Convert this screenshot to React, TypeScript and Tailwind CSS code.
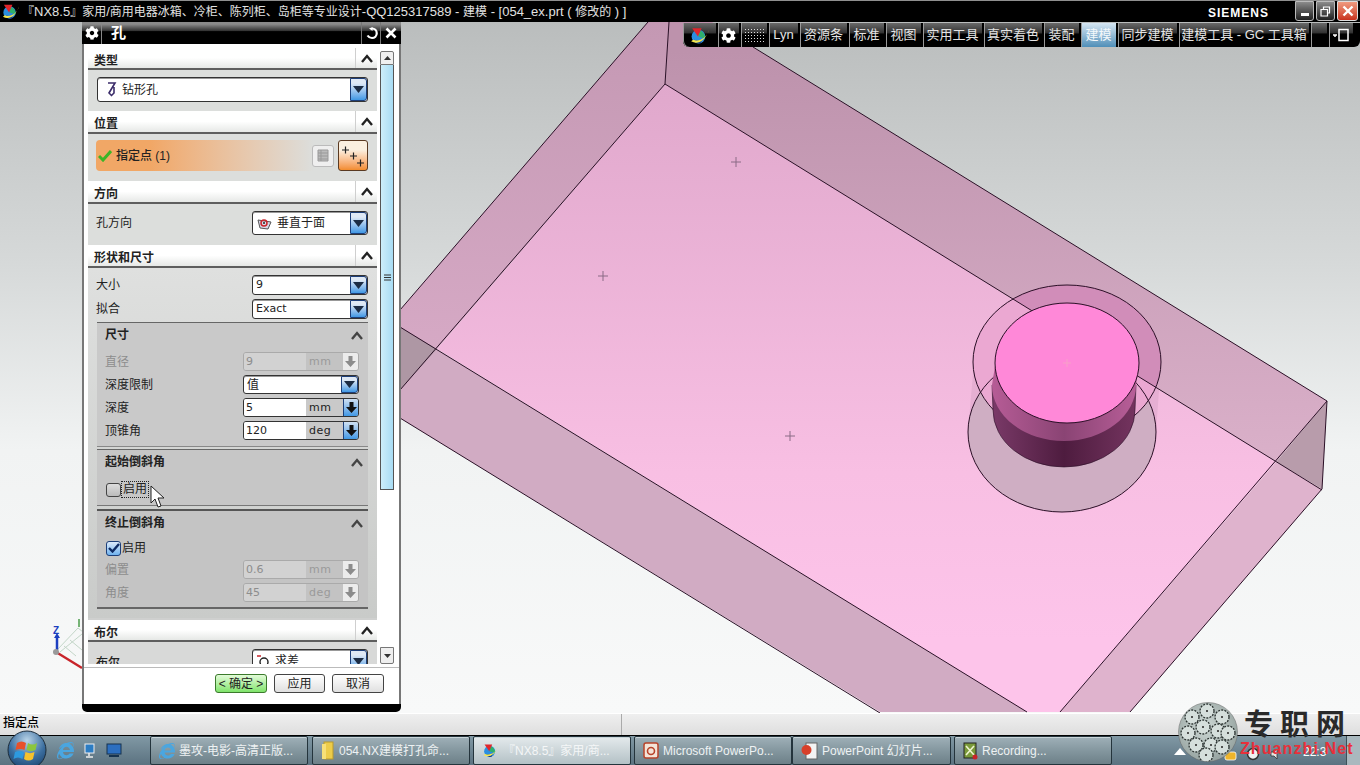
import React from "react";
import { FaCog, FaInternetExplorer } from "react-icons/fa";

const font = "[font-family:'Liberation_Sans','Noto_Sans_CJK_SC',sans-serif]";

function NxLogo({ size = 18 }: { size?: number }) {
  return (
    <svg width={size} height={size} viewBox="0 0 20 20">
      <circle cx="9" cy="11" r="6.5" fill="#2b8fe0" />
      <path d="M9 5a6.500 6.500 0 0 1 6 8L9 11z" fill="#2fb06c" />
      <path d="M3 3h9L8.500 11z" fill="#e0262c" />
      <path d="M5 14c3 1.500 6 .5 8-1l-2 4.500c-2 .5-5-.5-6-3.500z" fill="#15408f" />
      <path d="M2 15.500c6 3.500 13 .5 17-11-2 8-10 12-15 9.500z" fill="#f6e64e" />
    </svg>
  );
}

function Chevron({ cls = "text-[#222]" }: { cls?: string }) {
  return (
    <svg width="12" height="9" viewBox="0 0 12 9" className={cls}>
      <path d="M1 8 6 2l5 6" fill="none" stroke="currentColor" strokeWidth="2.4" />
    </svg>
  );
}

function Head({ title, h = "h-[23px]" }: { title: string; h?: string }) {
  return (
    <div className={`flex ${h} items-stretch border-b-2 border-[#5e5e5e] bg-gradient-to-b from-white from-50% to-[#e6e8e6]`}>
      <div className="flex-1 pl-[6px] pt-[5px] text-[12px] font-bold leading-[17px] text-[#222]">{title}</div>
      <div className="flex w-[22px] items-center justify-center border-l border-[#cfcfcf]">
        <Chevron />
      </div>
    </div>
  );
}

function DropBtn() {
  return (
    <div className="flex w-[17px] shrink-0 items-center justify-center rounded-r-[3px] border border-[#1d3f7a] bg-gradient-to-b from-[#dfe9f5] from-20% to-[#3f98e4]">
      <svg width="11" height="7" viewBox="0 0 11 7">
        <path d="M0 0h11L5.5 7z" fill="#1c2c44" />
      </svg>
    </div>
  );
}

function Select({ children, w, h = "h-[20px]" }: { children: React.ReactNode; w: string; h?: string }) {
  return (
    <div className={`flex ${w} ${h} shrink-0 rounded-[3px] border border-[#333] bg-white shadow-[inset_0_1px_0_#999]`}>
      <div className="flex min-w-0 flex-1 items-center gap-[5px] pl-[3px] text-[12px] text-[#222]">{children}</div>
      <DropBtn />
    </div>
  );
}

function Field({ value, unit, disabled }: { value: string; unit: string; disabled?: boolean }) {
  return (
    <div
      className={`flex h-[19px] w-[116px] overflow-hidden rounded-[3px] border font-['DejaVu_Sans',sans-serif] text-[11px] ${
        disabled ? "border-[#aaa] text-[#8d8d8d]" : "border-[#333] text-[#222]"
      }`}
    >
      <div className={`w-[62px] pl-[2px] leading-[17px] ${disabled ? "bg-[#d2d2d2]" : "bg-white"}`}>{value}</div>
      <div className={`w-[37px] pl-[3px] leading-[17px] tracking-[0.5px] ${disabled ? "bg-[#c3c3c3] text-[#9a9a9a]" : "bg-[#c9c9c9] font-medium"}`}>{unit}</div>
      <div
        className={`flex flex-1 items-center justify-center ${
          disabled ? "bg-[#ececec]" : "border-l border-[#1d3f7a] bg-gradient-to-b from-[#cfe0f2] to-[#3f98e4]"
        }`}
      >
        <svg width="11" height="11" viewBox="0 0 11 11">
          <path d="M3.5 0h4v5H11L5.5 11 0 5h3.5z" fill={disabled ? "#8c8c8c" : "#111"} />
        </svg>
      </div>
    </div>
  );
}

function LabelRow({ label, dim, children }: { label: string; dim?: boolean; children: React.ReactNode }) {
  return (
    <div className="flex h-[19px] items-center justify-between pl-[8px] pr-[9px]">
      <span className={`text-[12px] ${dim ? "text-[#8d8d8d]" : "text-[#222]"}`}>{label}</span>
      {children}
    </div>
  );
}

function SubHead({ title }: { title: string }) {
  return (
    <div className="flex h-[24px] items-center justify-between pl-[8px] pr-[5px]">
      <span className="text-[12px] font-bold text-[#222]">{title}</span>
      <Chevron cls="text-[#444]" />
    </div>
  );
}

function Cursor() {
  return (
    <svg width="16" height="24" viewBox="0 0 16 24" className="absolute left-[66px] top-[441px]">
      <path d="M1 1v17l4-4 3 8 3-1-3-8h6z" fill="#fff" stroke="#222" strokeWidth="1" />
    </svg>
  );
}

function Dialog() {
  return (
    <div className={`absolute left-[82px] top-0 flex h-[690px] w-[319px] flex-col overflow-hidden rounded-b-[5px] bg-black ${font}`}>
      {/* title */}
      <div className="flex h-[22px] shrink-0 items-stretch bg-gradient-to-b from-[#8a8a8a] from-10% via-[#333] via-40% to-black to-45%">
        <div className="flex w-[20px] items-center justify-center border-r border-[#888] text-white">
          <FaCog size={14} />
        </div>
        <div className="flex-1 pl-[9px] text-[15px] font-bold leading-[22px] text-white">孔</div>
        <div className="flex w-[20px] items-center justify-center border-x border-[#777] text-white">
          <svg width="13" height="13" viewBox="0 0 13 13">
            <path d="M7 1.5a4.5 4.5 0 0 1 0 9.5c-2 0-3.500-1-4.500-2.500" fill="none" stroke="#fff" strokeWidth="2.200" />
            <path d="M4 1.500 7.500 0v4z" fill="#fff" />
          </svg>
        </div>
        <div className="flex w-[20px] items-center justify-center text-white">
          <svg width="12" height="12" viewBox="0 0 12 12">
            <path d="M1.500 1.500l9 9M10.500 1.500l-9 9" stroke="#fff" strokeWidth="2.600" />
          </svg>
        </div>
      </div>

      {/* body */}
      <div className="relative flex h-[660px] shrink-0 flex-col border-x-2 border-[#777] bg-white">
        <div className="flex h-[623px] flex-1">
          <div className="ml-[4px] h-[620px] w-[289px] shrink-0 overflow-hidden pt-[4px]">
            <Head title="类型" h="h-[22px]" />
            <div className="h-[41px] bg-[#dcdedc] px-[9px] pt-[7px]">
              <Select w="w-[271px]" h="h-[25px]">
                <svg width="11" height="15" viewBox="0 0 11 15" className="ml-[5px]">
                  <path d="M2 1h7L3 11l3 3M8 5v6l-3 3" fill="none" stroke="#3b2c6a" strokeWidth="1.600" />
                </svg>
                <span className="text-[12px]">钻形孔</span>
              </Select>
            </div>

            <Head title="位置" />
            <div className="flex h-[47px] items-start bg-[#dcdedc] pl-[8px] pt-[6px]">
              <div className="flex h-[31px] w-[272px] items-center rounded-[4px] bg-gradient-to-r from-[#f1a766] from-20% to-[#dcdedc] to-80%">
                <svg width="14" height="12" viewBox="0 0 14 12" className="ml-[2px]">
                  <path d="M1 6l4 4 8-9" fill="none" stroke="#3cb526" strokeWidth="3" />
                </svg>
                <span className="ml-[4px] text-[12px] font-medium text-[#222]">指定点 (1)</span>
                <div className="ml-auto mr-[4px] flex h-[22px] w-[22px] items-center justify-center rounded-[3px] border border-[#bbb] bg-[#efefef]">
                  <svg width="12" height="13" viewBox="0 0 12 13">
                    <path d="M1 1h10v11H1zM1 4h10M1 7h10M1 10h10M4 1v11" fill="#bbb" stroke="#999" strokeWidth="1" />
                  </svg>
                </div>
                <div className="flex h-[31px] w-[30px] items-center justify-center rounded-[3px] border border-[#5a3a22] bg-gradient-to-b from-[#fbf0e0] from-30% to-[#f28c2c]">
                  <svg width="26" height="24" viewBox="0 0 26 24">
                    <path d="M2 6h7M5.500 2.500v7M10 12h7M13.500 8.500v7M17 19h7M20.500 15.500v7" stroke="#222" strokeWidth="1.200" />
                  </svg>
                </div>
              </div>
            </div>

            <Head title="方向" />
            <div className="flex h-[41px] items-start justify-between bg-[#dcdedc] pl-[8px] pr-[9px] pt-[7px]">
              <span className="pt-[3px] text-[12px] text-[#222]">孔方向</span>
              <Select w="w-[116px]" h="h-[24px]">
                <svg width="15" height="13" viewBox="0 0 15 13" className="ml-[1px]">
                  <path d="M1 3l13 2-3 7-8-1z" fill="#d9d9e8" stroke="#555" />
                  <circle cx="7" cy="6" r="3" fill="none" stroke="#c8242a" strokeWidth="1.500" />
                  <circle cx="7" cy="6" r="1" fill="#222" />
                </svg>
                <span className="text-[12px]">垂直于面</span>
              </Select>
            </div>

            <Head title="形状和尺寸" />
            <div className="h-[350px] bg-gradient-to-b from-[#dfe0df] to-[#c9cbc9] pt-[7px]">
              <div className="flex h-[20px] items-center justify-between pl-[8px] pr-[9px]">
                <span className="text-[12px] text-[#222]">大小</span>
                <Select w="w-[116px]">
                  <span className="font-['DejaVu_Sans',sans-serif] text-[11px]">9</span>
                </Select>
              </div>
              <div className="mt-[4px] flex h-[20px] items-center justify-between pl-[8px] pr-[9px]">
                <span className="text-[12px] text-[#222]">拟合</span>
                <Select w="w-[116px]">
                  <span className="font-['DejaVu_Sans',sans-serif] text-[11px]">Exact</span>
                </Select>
              </div>

              <div className="ml-[9px] mt-[3px] h-[125px] w-[271px] border-y border-t-[#666] border-b-[#888] bg-[#c9c9c9]">
                <SubHead title="尺寸" />
                <div className="mt-[5px] flex flex-col gap-[4px]">
                  <LabelRow label="直径" dim>
                    <Field value="9" unit="mm" disabled />
                  </LabelRow>
                  <LabelRow label="深度限制">
                    <Select w="w-[116px]" h="h-[19px]">
                      <span className="text-[12px]">值</span>
                    </Select>
                  </LabelRow>
                  <LabelRow label="深度">
                    <Field value="5" unit="mm" />
                  </LabelRow>
                  <LabelRow label="顶锥角">
                    <Field value="120" unit="deg" />
                  </LabelRow>
                </div>
              </div>

              <div className="ml-[9px] mt-[2px] h-[57px] w-[271px] border-y border-t-[#666] border-b-[#777] bg-[#c6c6c6]">
                <SubHead title="起始倒斜角" />
                <div className="mt-[7px] flex items-center pl-[9px]">
                  <div className="h-[14px] w-[15px] rounded-[3px] border border-[#444] bg-gradient-to-b from-[#ddd] to-[#bbb]" />
                  <span className="border border-dotted border-[#222] px-[1px] text-[12px] leading-[15px] text-[#222]">启用</span>
                </div>
              </div>

              <div className="ml-[9px] mt-[3px] h-[100px] w-[271px] border-y-2 border-t-[#555] border-b-[#666] bg-[#c4c4c4]">
                <SubHead title="终止倒斜角" />
                <div className="mt-[6px] flex h-[14px] items-center pl-[9px]">
                  <div className="flex h-[15px] w-[15px] items-center justify-center rounded-[3px] border border-[#1d3f7a] bg-gradient-to-b from-[#dceafa] to-[#6fb2ee]">
                    <svg width="12" height="10" viewBox="0 0 12 10">
                      <path d="M1 5l3.500 3.500L11 1" fill="none" stroke="#0e2a63" strokeWidth="2.400" />
                    </svg>
                  </div>
                  <span className="pl-[1px] text-[12px] text-[#222]">启用</span>
                </div>
                <div className="mt-[5px] flex flex-col gap-[4px]">
                  <LabelRow label="偏置" dim>
                    <Field value="0.6" unit="mm" disabled />
                  </LabelRow>
                  <LabelRow label="角度" dim>
                    <Field value="45" unit="deg" disabled />
                  </LabelRow>
                </div>
              </div>
            </div>

            <div className="h-[2px] bg-[#cfd0cf]" />
            <Head title="布尔" h="h-[22px]" />
            <div className="flex h-[40px] items-start justify-between bg-[#d8d9d8] pl-[8px] pr-[9px] pt-[7px]">
              <span className="pt-[5px] text-[12px] font-medium text-[#222]">布尔</span>
              <Select w="w-[116px]" h="h-[24px]">
                <svg width="14" height="12" viewBox="0 0 14 12">
                  <path d="M1 1h4" stroke="#c8242a" strokeWidth="1.500" />
                  <circle cx="8" cy="7" r="4" fill="none" stroke="#222" strokeWidth="1.400" />
                </svg>
                <span className="text-[12px]">求差</span>
              </Select>
            </div>
          </div>

          {/* scrollbar */}
          <div className="ml-[3px] flex h-[620px] w-[14px] flex-col pt-[7px]">
            <div className="flex h-[14px] shrink-0 items-center justify-center rounded-t-[2px] border border-[#777] bg-[#f0f0f0]">
              <svg width="7" height="4" viewBox="0 0 7 4">
                <path d="M0 4l3.500-4L7 4z" fill="#333" />
              </svg>
            </div>
            <div className="flex h-[425px] shrink-0 items-center justify-center border-x border-b border-[#555] bg-gradient-to-r from-[#cdeefa] to-[#a8dcf4]">
              <svg width="7" height="7" viewBox="0 0 7 7">
                <path d="M0 1h7M0 3.500h7M0 6h7" stroke="#333" strokeWidth="1" />
              </svg>
            </div>
            <div className="flex-1" />
            <div className="flex h-[17px] shrink-0 items-center justify-center rounded-b-[2px] border border-[#777] bg-[#efefef]">
              <svg width="7" height="4" viewBox="0 0 7 4">
                <path d="M0 0l3.500 4L7 0z" fill="#333" />
              </svg>
            </div>
          </div>
        </div>

        {/* footer */}
        <div className="flex h-[37px] shrink-0 items-start gap-[7px] border-t border-[#bbb] pl-[131px] pt-[6px] text-[12px]">
          <div className="flex h-[19px] w-[52px] items-center justify-center rounded-[3px] border border-[#3b7a2c] bg-gradient-to-b from-[#e2fbd8] to-[#7fe36a] text-[#222]">&lt; 确定 &gt;</div>
          <div className="flex h-[19px] w-[51px] items-center justify-center rounded-[3px] border border-[#444] bg-gradient-to-b from-white to-[#e0e0e0] text-[#222]">应用</div>
          <div className="flex h-[19px] w-[52px] items-center justify-center rounded-[3px] border border-[#444] bg-gradient-to-b from-white to-[#e0e0e0] text-[#222]">取消</div>
        </div>
        <Cursor />
      </div>
    </div>
  );
}

const tabs: [string, string, boolean?][] = [
  ["Lyn", "w-[29px]"],
  ["资源条", "w-[47px]"],
  ["标准", "w-[35px]"],
  ["视图", "w-[35px]"],
  ["实用工具", "w-[59px]"],
  ["真实着色", "w-[58px]"],
  ["装配", "w-[35px]"],
  ["建模", "w-[35px]", true],
  ["同步建模", "w-[59px]"],
  ["建模工具 - GC 工具箱", "w-[130px]"],
  ["", "w-[16px]"],
];

const tabBase = "flex h-full items-center justify-center whitespace-nowrap shadow-[inset_1px_0_0_#999]";
const tabDark = "bg-gradient-to-b from-[#6a6a6a] via-[#333] via-40% to-black to-50% text-[#e4e4e4]";

function Toolbar() {
  return (
    <div className={`absolute right-0 top-[1px] flex h-[24px] w-[677px] items-stretch gap-[2px] rounded-b-[6px] bg-black text-[13px] ${font}`}>
      <div className={`${tabBase} ${tabDark} w-[33px] rounded-bl-[6px]`}>
        <NxLogo size={21} />
      </div>
      <div className={`${tabBase} ${tabDark} w-[21px]`}>
        <FaCog size={15} color="#fff" />
      </div>
      <div className={`${tabBase} ${tabDark} w-[26px]`}>
        <svg width="20" height="14" viewBox="0 0 20 14">
          {[1, 4, 7, 10, 13].map((y) =>
            [1, 4, 7, 10, 13, 16, 19].map((x) => <rect key={`${x}-${y}`} x={x} y={y} width="1" height="1" fill="#ddd" />)
          )}
        </svg>
      </div>
      {tabs.map(([label, w, active], i) => (
        <div
          key={i}
          className={`${tabBase} ${w} ${active ? "bg-gradient-to-b from-[#d6e6f2] to-[#4f8fb8] text-[#f4f8fb]" : tabDark}`}
        >
          {label}
        </div>
      ))}
      <div className={`${tabBase} ${tabDark} w-[24px]`}>
        <svg width="18" height="14" viewBox="0 0 18 14">
          <path d="M1 7h4M3 9V7" stroke="#fff" strokeWidth="1.500" />
          <rect x="7" y="1.500" width="9" height="11" fill="none" stroke="#fff" strokeWidth="1.500" />
        </svg>
      </div>
    </div>
  );
}

function Scene() {
  const L = "#2a0f26";
  return (
    <svg width="1360" height="691" viewBox="0 22 1360 691" className="block">
      <defs>
        <linearGradient id="bg" gradientUnits="userSpaceOnUse" x1="0" y1="22" x2="0" y2="712">
          <stop offset="0" stopColor="#babdbd" />
          <stop offset="0.35" stopColor="#d6d9d9" />
          <stop offset="0.62" stopColor="#f1f3f3" />
          <stop offset="1" stopColor="#f8f9f9" />
        </linearGradient>
        <linearGradient id="floor" gradientUnits="userSpaceOnUse" x1="0" y1="84" x2="0" y2="640">
          <stop offset="0" stopColor="#e0a8cc" />
          <stop offset="0.7" stopColor="#f8bfe3" />
          <stop offset="1" stopColor="#fdc4ea" />
        </linearGradient>
        <linearGradient id="leftw" gradientUnits="userSpaceOnUse" x1="0" y1="22" x2="0" y2="390">
          <stop offset="0" stopColor="#c498b3" />
          <stop offset="1" stopColor="#d8abc7" />
        </linearGradient>
        <linearGradient id="topw" gradientUnits="userSpaceOnUse" x1="0" y1="50" x2="0" y2="460">
          <stop offset="0" stopColor="#bd92ac" />
          <stop offset="1" stopColor="#dab0c9" />
        </linearGradient>
        <linearGradient id="side" gradientUnits="userSpaceOnUse" x1="992" y1="0" x2="1136" y2="0">
          <stop offset="0" stopColor="#7a3a68" />
          <stop offset="0.5" stopColor="#4e1c3f" />
          <stop offset="1" stopColor="#74345f" />
        </linearGradient>
        <linearGradient id="side2" gradientUnits="userSpaceOnUse" x1="992" y1="0" x2="1136" y2="0">
          <stop offset="0" stopColor="#b65c96" />
          <stop offset="0.5" stopColor="#8a4474" />
          <stop offset="1" stopColor="#b85e98" />
        </linearGradient>
        <clipPath id="topclip">
          <polygon points="669,22 712,22 1327,401 1277,462 665,84" />
        </clipPath>
      </defs>
      <rect x="0" y="22" width="1360" height="691" fill="url(#bg)" />

      <polygon points="400,310 648,22 669,22 665,84 437,349 400,390" fill="url(#leftw)" />
      <polygon points="669,22 712,22 1327,401 1276,462 665,84" fill="url(#topw)" />
      <polygon points="665,84 1276,462 1060,712 1027,712 437,349" fill="url(#floor)" />
      <polygon points="400,327 1027,712 880,712 400,418" fill="#d1abc3" />
      <polygon points="400,327 437,349 400,390" fill="#ae97a4" />
      <polygon points="1276,462 1322,489 1130,712 1060,712" fill="#dfb3cd" />
      <polygon points="1276,462 1327,401 1322,489" fill="#b89cab" />

      {/* hole walls */}
      <polygon points="974,362 968,432 1156,432 1161,362" fill="#dba6c8" opacity="0.55" />
      <ellipse cx="1062" cy="432" rx="94" ry="80" fill="#cfaec3" />
      <ellipse cx="1067" cy="362" rx="94" ry="77" fill="#eba8d2" />
      <ellipse cx="1067" cy="362" rx="94" ry="77" fill="#d18db9" clipPath="url(#topclip)" />
      <ellipse cx="1062" cy="432" rx="94" ry="80" fill="none" stroke={L} strokeWidth="1" />
      <ellipse cx="1067" cy="362" rx="94" ry="77" fill="none" stroke={L} strokeWidth="1" />

      <g fill="none" stroke={L} strokeWidth="1">
        <path d="M400 310 648 22" />
        <path d="M669 22 665 84" />
        <path d="M665 84 400 390" />
        <path d="M665 84 1322 490" />
        <path d="M753 47 1327 401 1322 489 1130 712" />
        <path d="M1327 401 1060 712" />
        <path d="M400 327 1027 712" />
        <path d="M400 418 880 713" />
      </g>

      {/* pin */}
      <path d="M992 385 993 410A71 57 0 0 0 1135 410L1136 385z" fill="url(#side)" stroke={L} strokeWidth="0.600" />
      <path d="M995 366 992 385A72 56 0 0 0 1136 385L1139 366z" fill="url(#side2)" />
      <ellipse cx="1067" cy="363" rx="72" ry="60" fill="#ff88d8" stroke={L} strokeWidth="1" />

      <g stroke="#8a6a85" strokeWidth="1">
        <path d="M731 162h10M736 157v10" />
        <path d="M598 276h10M603 271v10" />
        <path d="M785 436h10M790 431v10" />
      </g>
      <path d="M1063 363h8M1067 359v8" stroke="#f7a0c8" strokeWidth="1" />

      {/* triad */}
      <g fill="none" strokeWidth="1">
        <path d="M57 650 78 628l5 4M60 652 82 634M70 640l12 10M64 646l12 10" stroke="#c3d6c8" />
        <path d="M79 627v-8" stroke="#4a9c4a" strokeWidth="1.500" />
      </g>
      <path d="M56 652 82 668" stroke="#c8242a" strokeWidth="2.500" />
      <path d="M57 650V636" stroke="#1d3fc0" strokeWidth="2.500" />
      <path d="M54 638l3-5 3 5z" fill="#1d3fc0" />
      <circle cx="56" cy="652" r="3" fill="#9a9a9a" />
      <text x="53" y="634" fontSize="10" fontFamily="Liberation Sans" fontWeight="700" fill="#1d3fc0">Z</text>
    </svg>
  );
}

function StartOrb() {
  return (
    <svg width="40" height="40" viewBox="0 0 40 40" className="absolute left-[7px] top-[-6px]">
      <defs>
        <radialGradient id="orb" cx="0.5" cy="0.25" r="0.85">
          <stop offset="0" stopColor="#b9d4e8" />
          <stop offset="0.55" stopColor="#3c6fa0" />
          <stop offset="1" stopColor="#143a63" />
        </radialGradient>
      </defs>
      <circle cx="20" cy="20" r="19" fill="url(#orb)" stroke="#1c2c3a" />
      <path d="M10 13c3-2 6-2 9 0l-1.500 7c-3-1.500-6-1.500-9 0z" fill="#e8512a" />
      <path d="M21 13c3 2 6 2 9 0l-1.500 7c-3 1.500-6 1.500-9 0z" fill="#8cc63e" />
      <path d="M8 22c3-1.500 6-1.500 9 0l-1.500 7c-3-2-6-2-9 0z" fill="#2d9ae0" />
      <path d="M18.500 22c3 1.500 6 1.500 9 0l-1.500 7c-3 2-6 2-9 0z" fill="#f6c22c" />
    </svg>
  );
}

const btnDark = "bg-gradient-to-b from-[#9fb0b8] via-[#84979f] via-50% to-[#6d8088]";

function TaskBtn({ icon, label, w, light, ml }: { icon: React.ReactNode; label: string; w: string; light?: boolean; ml?: string }) {
  return (
    <div
      className={`flex h-full ${w} ${ml ?? ""} items-center gap-[4px] overflow-hidden whitespace-nowrap rounded-[2px] border border-[#24343c] pl-[8px] text-[12px] shadow-[inset_0_1px_0_#c8d4d8] ${
        light ? "bg-gradient-to-b from-[#e4eaec] to-[#b4c1c6] text-[#f4f6f7]" : `${btnDark} text-[#eef2f3]`
      }`}
    >
      {icon}
      <span>{label}</span>
    </div>
  );
}

function Ball() {
  const pts = [
    [14, 16], [29, 10], [44, 16], [10, 32], [25, 26], [40, 30], [50, 32], [18, 44], [33, 44], [44, 46], [28, 54],
  ];
  return (
    <svg width="60" height="62" viewBox="0 0 60 62">
      <defs>
        <radialGradient id="ball2" cx="0.45" cy="0.4" r="0.7">
          <stop offset="0" stopColor="#cdd8d5" />
          <stop offset="1" stopColor="#8f9c99" />
        </radialGradient>
        <clipPath id="ballclip">
          <circle cx="30" cy="31" r="29.500" />
        </clipPath>
      </defs>
      <circle cx="30" cy="31" r="29.500" fill="url(#ball2)" stroke="#666" strokeWidth="0.500" />
      <g clipPath="url(#ballclip)">
        {pts.map(([x, y], i) => (
          <g key={i}>
            <circle cx={x} cy={y} r="7" fill="#d5dfdc" stroke="#2c3432" strokeWidth="1.300" strokeDasharray="2 1.200" />
            <circle cx={x} cy={y} r="1" fill="#222" />
          </g>
        ))}
      </g>
    </svg>
  );
}

export default function App() {
  return (
    <div className={`relative flex h-[765px] w-[1360px] flex-col overflow-hidden bg-black ${font}`}>
      {/* title bar */}
      <div className="relative flex h-[22px] shrink-0 items-center border-t border-[#8f8f8f] bg-black">
        <div className="ml-[1px] w-[21px]">
          <NxLogo size={19} />
        </div>
        <span className="whitespace-nowrap text-[12px] text-[#e2e2e2]">
          『<span className="text-[13px]">NX8.5</span>』家用<span className="text-[13px]">/</span>商用电器冰箱、冷柜、陈列柜、岛柜等专业设计
          <span className="text-[13px]">-QQ125317589 - </span>建模<span className="text-[13px]"> - [054_ex.prt ( </span>修改的<span className="text-[13px]"> ) ]</span>
        </span>
        <span className="absolute left-[1208px] top-[3px] text-[12px] font-black tracking-[1px] text-white">SIEMENS</span>
        <div className="absolute right-[2px] top-0 flex h-[20px] gap-[2px]">
          <div className="flex w-[19px] items-end justify-center rounded-b-[3px] border border-[#bbb] bg-gradient-to-b from-[#8c8c8c] to-[#222] pb-[4px]">
            <div className="h-[3px] w-[8px] bg-white" />
          </div>
          <div className="flex w-[19px] items-center justify-center rounded-b-[3px] border border-[#bbb] bg-gradient-to-b from-[#8c8c8c] to-[#222]">
            <svg width="11" height="11" viewBox="0 0 11 11">
              <path d="M3.500 3V1h6v6H8M1 3.500h6.500V10H1z" fill="none" stroke="#fff" strokeWidth="1.200" />
            </svg>
          </div>
          <div className="flex w-[21px] items-center justify-center rounded-b-[3px] border border-[#ddd] bg-gradient-to-b from-[#ef9a80] to-[#c8301c]">
            <svg width="12" height="12" viewBox="0 0 12 12">
              <path d="M1.500 1.500l9 9M10.500 1.500l-9 9" stroke="#fff" strokeWidth="2.400" />
            </svg>
          </div>
        </div>
      </div>

      {/* graphics window */}
      <div className="relative h-[691px] shrink-0">
        <Scene />
        <Toolbar />
        <Dialog />
      </div>

      {/* status */}
      <div className="flex h-[22px] shrink-0 border-t border-white bg-gradient-to-b from-[#efefef] to-[#dedede]">
        <div className="w-[622px] border-r border-[#aaa] pl-[3px] text-[12px] font-medium leading-[19px] text-black">指定点</div>
      </div>

      {/* taskbar */}
      <div className="relative flex h-[30px] shrink-0 items-stretch border-t border-black bg-gradient-to-b from-[#8199a5] to-[#5b7280]">
        <StartOrb />
        <div className="ml-[57px] flex w-[93px] items-center gap-[8px]">
          <FaInternetExplorer size={17} color="#4aa6e0" />
          <svg width="14" height="16" viewBox="0 0 14 16">
            <rect x="3" y="1" width="9" height="9" fill="#2c7dc4" stroke="#eee" />
            <path d="M7 10v3M4 14h7" stroke="#eee" strokeWidth="1.500" />
          </svg>
          <svg width="16" height="15" viewBox="0 0 16 15" className="ml-[2px]">
            <rect x="1" y="1" width="14" height="10" fill="#2c6fc0" stroke="#16334f" />
            <path d="M3 13h10" stroke="#16334f" strokeWidth="2" />
          </svg>
        </div>
        <div className="flex h-full items-stretch text-[12px]">
          <TaskBtn w="w-[158px]" label="墨攻-电影-高清正版..." icon={<FaInternetExplorer size={16} color="#4aa6e0" />} />
          <TaskBtn w="w-[158px]" ml="ml-[4px]" label="054.NX建模打孔命..." icon={
            <svg width="14" height="19" viewBox="0 0 14 19"><rect x="3" y="1" width="9" height="17" fill="#eccc4a" stroke="#b89a2c" /><rect x="1" y="3" width="4" height="15" fill="#f7e078" /></svg>
          } />
          <TaskBtn w="w-[158px]" ml="ml-[3px]" light label="『NX8.5』家用/商..." icon={<NxLogo size={17} />} />
          <TaskBtn w="w-[158px]" ml="ml-[3px]" label="Microsoft PowerPo..." icon={
            <svg width="16" height="17" viewBox="0 0 16 17"><rect x="1" y="1" width="14" height="15" rx="2" fill="#f4e4d8" stroke="#b8432a" strokeWidth="1.500" /><circle cx="8" cy="9" r="3.500" fill="none" stroke="#b8432a" strokeWidth="1.600" /></svg>
          } />
          <TaskBtn w="w-[159px]" label="PowerPoint 幻灯片..." icon={
            <svg width="17" height="18" viewBox="0 0 17 18"><rect x="5" y="1" width="11" height="16" fill="#f3f3f3" stroke="#666" /><circle cx="5.500" cy="8" r="5" fill="#d8402a" /></svg>
          } />
          <TaskBtn w="w-[158px]" ml="ml-[3px]" label="Recording..." icon={
            <svg width="15" height="18" viewBox="0 0 15 18"><rect x="1" y="1" width="12" height="15" fill="#7a9a3a" stroke="#222" /><path d="M3 4l8 9M11 4l-8 9" stroke="#eef4d0" strokeWidth="1.600" /><circle cx="12" cy="15" r="2.500" fill="#c8242a" /></svg>
          } />
        </div>
        <div className="ml-auto w-[14px] border-l border-[#3c5058] bg-[#a9b8be]" />

        {/* tray */}
        <svg width="12" height="7" viewBox="0 0 12 7" className="absolute left-[1174px] top-[12px]">
          <path d="M0 7l6-7 6 7z" fill="#fff" />
        </svg>
        <svg width="60" height="16" viewBox="0 0 60 16" className="absolute left-[1224px] top-[10px]">
          <rect x="1" y="6" width="11" height="8" rx="2" fill="#eeb52c" stroke="#fff" strokeWidth="0.800" />
          <circle cx="29" cy="8" r="5.500" fill="#f1f1f1" stroke="#333" strokeWidth="1.500" />
          <path d="M47 6h3l3-3v10l-3-3h-3z" fill="#e4e4e4" stroke="#333" strokeWidth="0.800" />
        </svg>
        <span className="absolute left-[1303px] top-[7px] text-[12px] text-white">22:3</span>
      </div>

      {/* watermark */}
      <div className="absolute left-[1178px] top-[701px]">
        <Ball />
      </div>
      <div className="absolute left-[1244px] top-[704px] whitespace-nowrap text-[29px] font-bold leading-[36px] tracking-[7px] text-[#2a2a2a] [font-family:'Noto_Sans_CJK_SC',serif]">专职网</div>
      <div className="absolute left-[1240px] top-[739px] whitespace-nowrap text-[16px] font-bold leading-[20px] tracking-[1.100px] text-[#e8303a]">Zhuanzhi.Net</div>
    </div>
  );
}
